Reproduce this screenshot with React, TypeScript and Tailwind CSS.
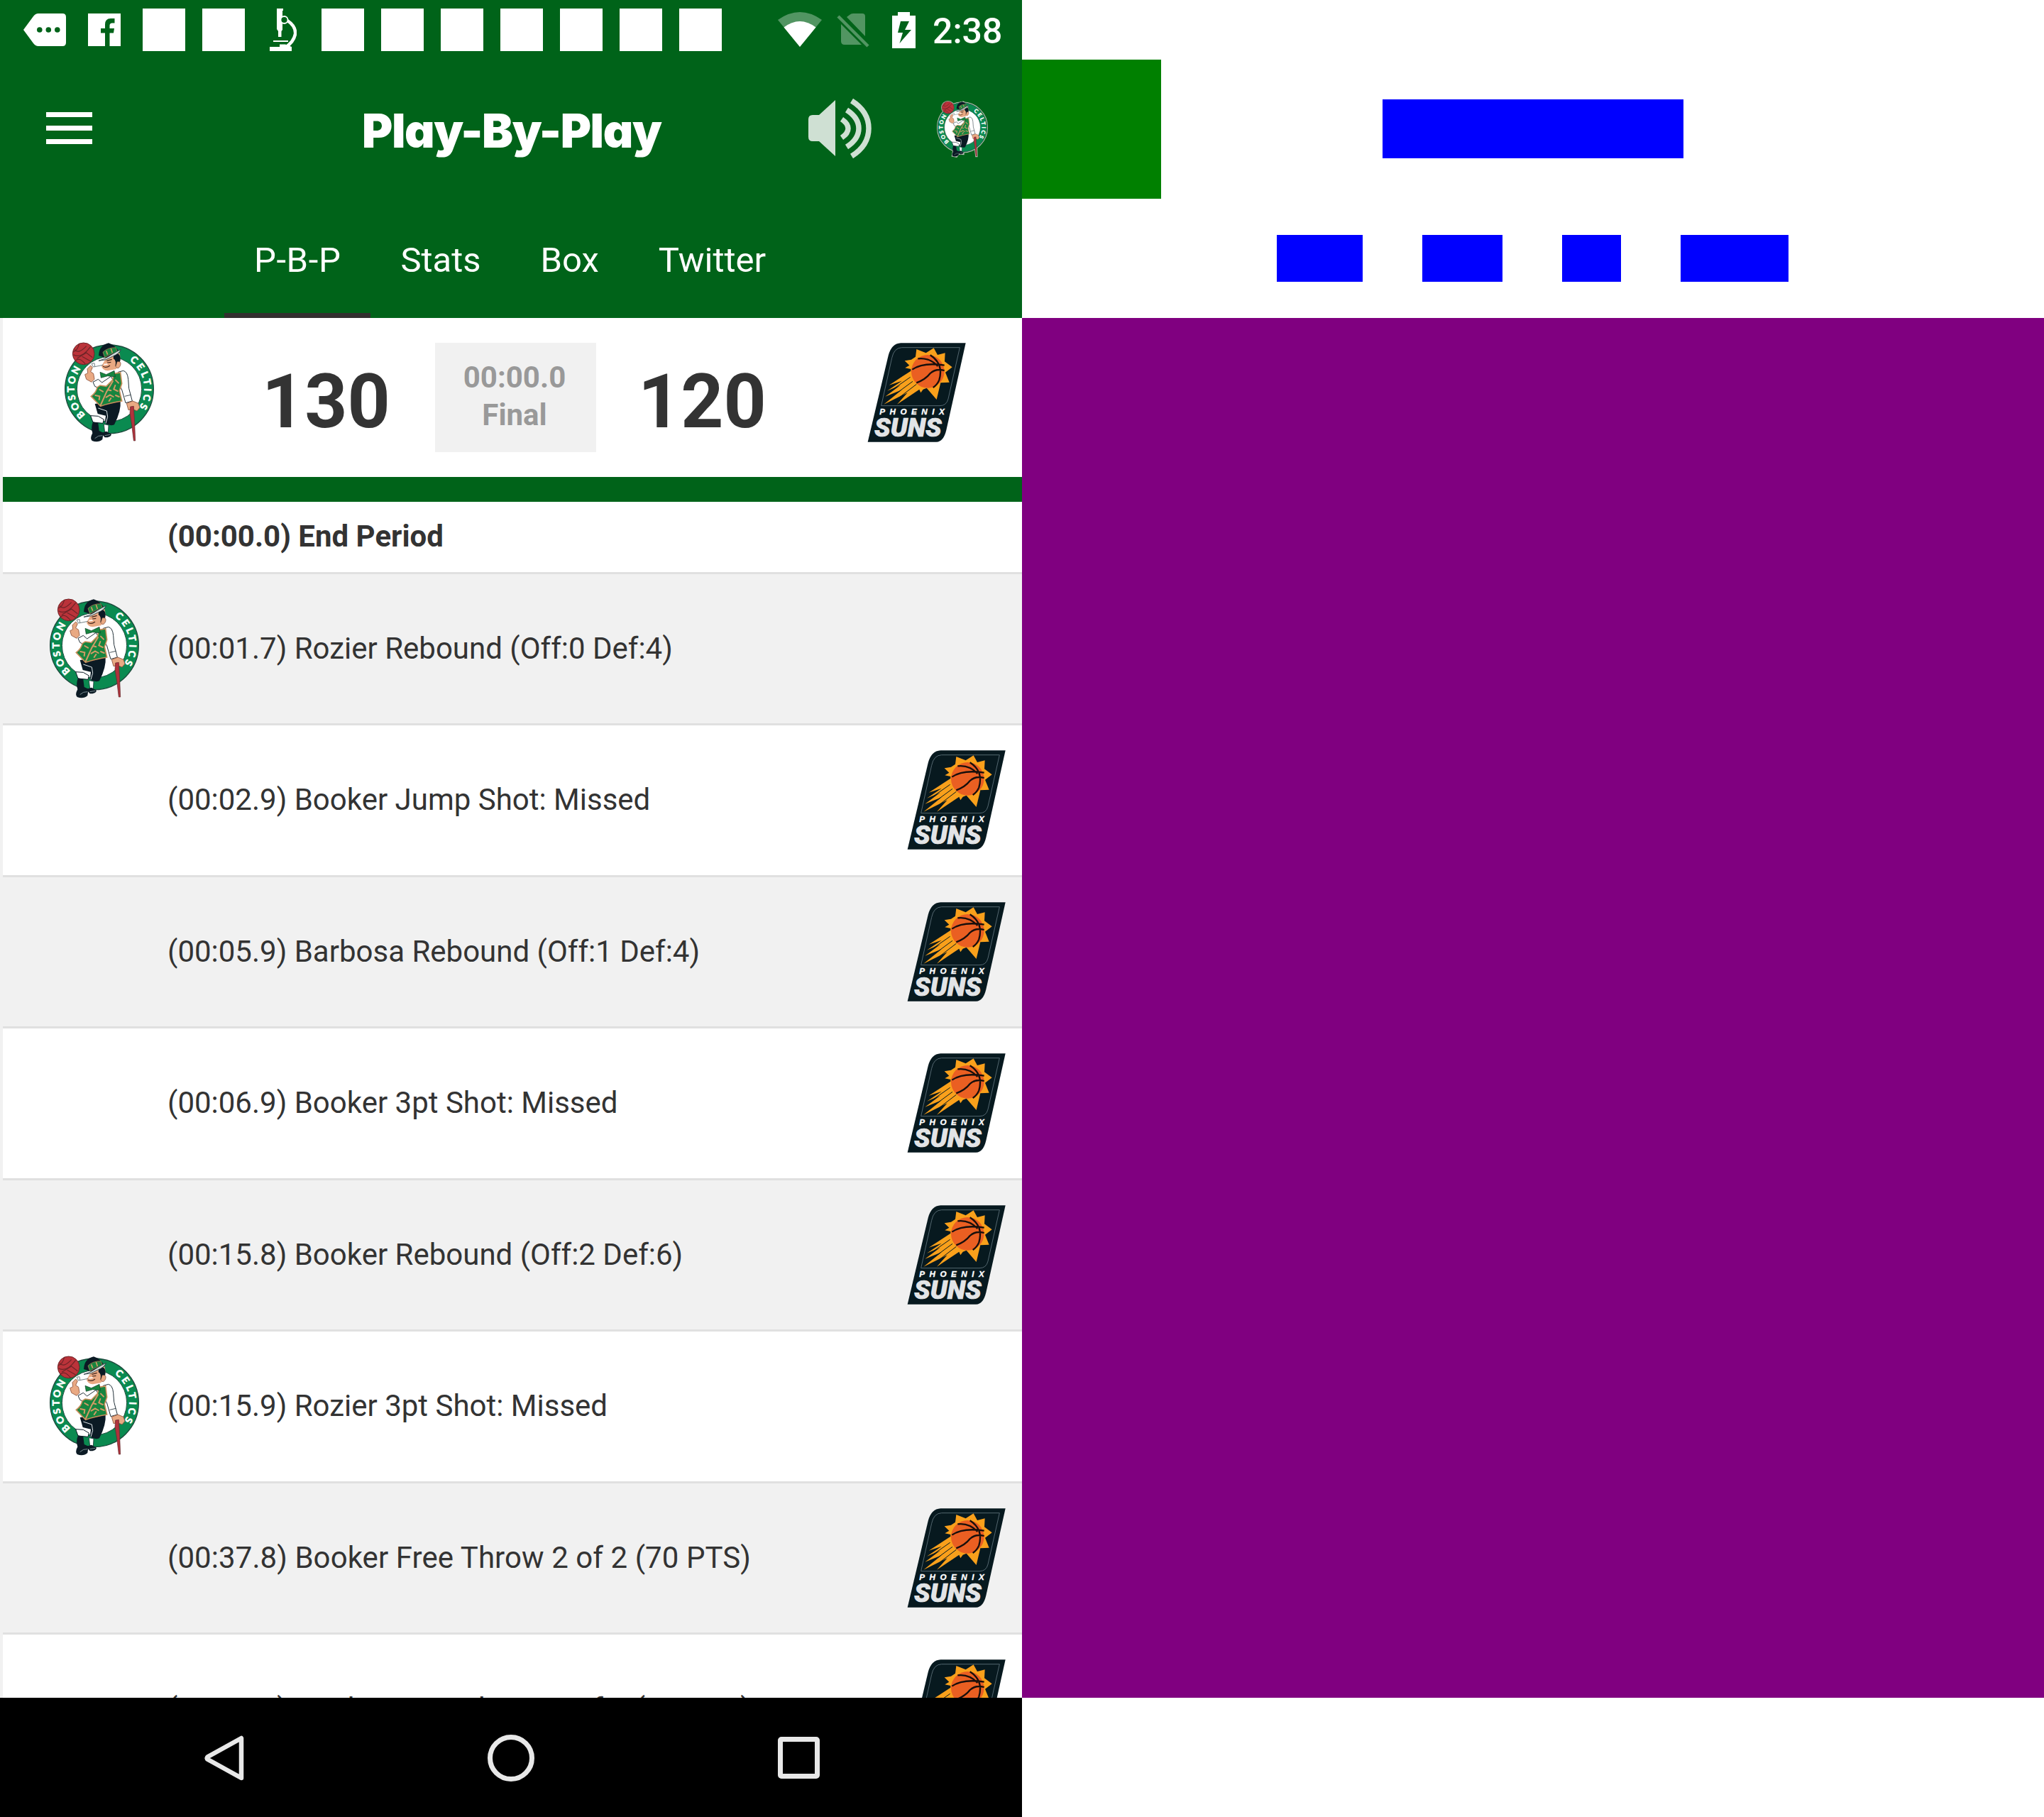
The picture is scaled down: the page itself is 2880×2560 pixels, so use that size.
import { useId } from "react";

const GREEN = "#006319";

function CelticsLogo({ className, outline = false }: { className: string; outline?: boolean }) {
  const id = useId();
  return (
    <svg className={className} viewBox="27 42 384 420" overflow="visible">
      <defs>
        <path id={id + "b"} d="M118 346.500A148 148 0 0 1 100.800 149" />
        <path id={id + "c"} d="M303.900 116.800A148 148 0 0 1 345.900 314.200" />
      </defs>
      {outline && (
        <g fill="#b9c4b4" stroke="#b9c4b4" strokeWidth="10">
          <circle cx="219" cy="238" r="189" />
          <circle cx="110" cy="88" r="47" />
          <path d="M170 110Q185 44 225 44Q260 60 266 110ZM145 350L152 400L142 455L175 462L192 440L228 442L230 400ZM304 310L322 458L330 458L326 310Z" />
        </g>
      )}
      <circle cx="219" cy="238" r="187" fill="#0a8a50" stroke="#1c4a3c" strokeWidth="4" />
      <circle cx="219" cy="238" r="137" fill="#fff" stroke="#1c4a3c" strokeWidth="3" />
      <g fill="#fff" stroke="#fff" strokeWidth="1.5" fontFamily="Lato" fontWeight="900" fontSize="41">
        <text textLength="214" lengthAdjust="spacing">
          <textPath href={"#" + id + "b"}>BOSTON</textPath>
        </text>
        <text textLength="222" lengthAdjust="spacing">
          <textPath href={"#" + id + "c"}>CELTICS</textPath>
        </text>
      </g>
      <circle cx="110" cy="88" r="46" fill="#bb333a" stroke="#6d2427" strokeWidth="3" />
      <path
        d="M72 70Q88 92 122 56M68 92Q100 112 140 58M82 108L122 84L148 104M76 118Q92 100 118 132M104 100L140 120M92 46Q84 76 66 80"
        fill="none"
        stroke="#6d2427"
        strokeWidth="3.5"
      />
      {/* pants and shoes */}
      <path d="M158 300L266 286Q270 330 240 388Q222 396 200 382L204 350L170 342Z" fill="#0b1a24" />
      <path d="M172 318L208 330L212 355L204 382" fill="none" stroke="#dfe6ea" strokeWidth="3" />
      <path d="M140 350L172 352L196 366L192 382L150 378Z" fill="#fff" stroke="#0b1a24" strokeWidth="3" />
      <path d="M196 386L216 390L214 420L200 420Z" fill="#fff" stroke="#0b1a24" strokeWidth="2" />
      <path d="M150 376L172 382L176 414L194 422L190 450Q172 466 146 456Q136 446 148 424Q140 400 150 376Z" fill="#0b1a24" />
      <path d="M184 424L206 416L228 428Q226 442 200 442Z" fill="#0b1a24" />
      <path d="M158 446Q172 432 190 434M200 434L222 430" fill="none" stroke="#8fa3a8" strokeWidth="2.5" />
      {/* sleeves */}
      <path
        d="M256 166L278 160Q296 164 299 196L302 235L316 288L288 296L272 240L264 226Z"
        fill="#fff"
        stroke="#24323a"
        strokeWidth="3"
      />
      <path d="M284 268L310 262" stroke="#24323a" strokeWidth="2.5" />
      <path
        d="M150 208L172 196L188 210L226 184L234 198L208 226L172 232L158 226Z"
        fill="#fff"
        stroke="#24323a"
        strokeWidth="3"
      />
      {/* waistcoat */}
      <path
        d="M180 222L206 226L232 200L240 172L266 168L272 214L262 244L272 288Q220 296 182 310L142 268Q164 252 168 230Z"
        fill="#17853f"
        stroke="#c98f5b"
        strokeWidth="5"
      />
      <g fill="none" stroke="#d29a66" strokeWidth="6" strokeLinecap="round">
        <path d="M234 204L208 248L182 306M178 240L192 248M160 264L178 268L176 282M206 272L222 262L236 270M218 288L226 276M246 200L258 212M244 222L238 238L254 246M246 264L260 270M212 240L226 244" />
      </g>
      {/* head */}
      <path d="M206 106L262 84Q274 130 246 154L212 160Q190 158 186 140Z" fill="#e9a983" />
      <path d="M238 90Q262 80 266 106Q266 138 244 140Q250 116 236 108Z" fill="#0b1a24" />
      <path d="M252 122Q272 118 266 138Q256 158 246 142Z" fill="#e9a983" stroke="#7a4a38" strokeWidth="2" />
      <path d="M192 142Q206 150 222 138M208 118L230 112M210 126L226 124" fill="none" stroke="#41251c" strokeWidth="3.5" />
      <path d="M212 132L196 134" stroke="#fff" strokeWidth="5" />
      <path d="M174 96Q176 52 216 43Q246 52 262 84L204 106Z" fill="#0b1a24" />
      <path d="M192 82Q210 62 246 62L254 82Q224 86 200 104Z" fill="#17853f" stroke="#c98f5b" strokeWidth="2" />
      <path d="M206 76L212 92M226 66L232 84" stroke="#d29a66" strokeWidth="5" />
      <path d="M174 118Q200 112 228 92Q248 80 268 70Q262 88 232 100Q206 118 174 118Z" fill="#d4dedb" stroke="#24323a" strokeWidth="2.5" />
      <path d="M180 166L206 176L240 160L244 186L212 182L184 190Z" fill="#17853f" stroke="#0b3a24" strokeWidth="2" />
      {/* hands, pipe and cane */}
      <path d="M126 152L140 138L148 146L140 164L152 172L156 196L144 208L122 196L116 176L128 170Z" fill="#e9a983" stroke="#8a4f38" strokeWidth="2.5" />
      <path d="M144 130L152 144L192 136M144 130L156 128L158 142" fill="none" stroke="#59686c" strokeWidth="2.5" />
      <path d="M292 298L318 288L342 298L348 316L336 330L316 322L300 326Z" fill="#e9a983" stroke="#8a4f38" strokeWidth="2.5" />
      <path d="M308 312L322 310L326 380L329 456L322 456L314 390L306 340Z" fill="#b0323c" stroke="#5d2a2c" strokeWidth="2" />
    </svg>
  );
}

function SunsLogo({ className }: { className: string }) {
  return (
    <svg className={className} viewBox="54 51 420 420">
      <path d="M196 52H470L388 420Q376 470 346 470H56L143 105Q156 54 196 52Z" fill="#07191f" />
      <path
        d="M200 71H445L396 288Q389 317 360 317H113L158 115Q167 72 200 71Z"
        fill="none"
        stroke="#53666f"
        strokeWidth="3"
      />
      <path
        d="M262 78L302 94L335 73L351 102L383 94L381 130L413 154L384 176L401 218L364 220L347 291L305 242L290 248L280 262L274 248L180 311L224 262L124 311L200 250L130 278L194 230L138 254L200 212L146 230L238 170L238 162L214 157L232 146L212 127L240 122L258 110Z"
        fill="#f9a01b"
      />
      <path d="M236 196L150 256M246 214L140 292M262 226L176 292" stroke="#07191f" strokeWidth="3" />
      <circle cx="310" cy="172" r="70" fill="#ea5f22" />
      <path
        d="M268 118Q318 112 352 150M244 164Q290 132 380 146M262 220Q300 206 320 180Q344 158 380 168M320 103Q378 140 358 208Q350 228 332 240"
        fill="none"
        stroke="#180f0c"
        strokeWidth="7"
      />
      <text
        x="106"
        y="355"
        textLength="274"
        fontFamily="Liberation Sans"
        fontStyle="italic"
        fontWeight="700"
        fontSize="35"
        fill="#fff"
        stroke="#fff"
        strokeWidth="1"
      >
        PHOENIX
      </text>
      <text
        x="84"
        y="447"
        textLength="284"
        lengthAdjust="spacingAndGlyphs"
        fontFamily="Roboto"
        fontStyle="italic"
        fontWeight="900"
        fontSize="112"
        fill="#e2e4e6"
        stroke="#eceef0"
        strokeWidth="2"
      >
        SUNS
      </text>
    </svg>
  );
}

function StatusBar() {
  return (
    <div className="flex h-[84px] items-center pl-[21px]">
      <div className="flex w-[84px] justify-center">
        <svg className="h-[46px] w-[60px]" viewBox="0 0 60 46">
          <path fillRule="evenodd" fill="#fff" d="M0 23L14 4Q17 0 21 0H55Q60 0 60 5V41Q60 46 55 46H21Q17 46 14 42ZM19 23a3.8 3.8 0 1 0 7.600 0a3.800 3.800 0 1 0-7.600 0ZM31.500 23a3.800 3.800 0 1 0 7.600 0a3.800 3.800 0 1 0-7.600 0ZM44 23a3.800 3.800 0 1 0 7.600 0a3.800 3.800 0 1 0-7.600 0Z" />
        </svg>
      </div>
      <div className="flex w-[84px] justify-center">
        <svg className="h-[46px] w-[46px]" viewBox="0 0 46 46">
          <path fill="#fff" d="M0 0H46V46H30.500V27.500H36L37 21H30.500V17Q30.500 13.500 34 13.500H37.500V7H32Q24 7 24 15.500V21H18V27.500H24V46H0Z" />
        </svg>
      </div>
      <div className="flex w-[84px] justify-center">
        <div className="h-[60px] w-[60px] bg-white" />
      </div>
      <div className="flex w-[84px] justify-center">
        <div className="h-[60px] w-[60px] bg-white" />
      </div>
      <div className="flex w-[84px] justify-center">
        <svg className="h-[60px] w-[38px]" viewBox="0 0 38 60">
          <path fill="#fff" d="M10 0H19V3H18V30L16.500 32V40H12V32L10 29Z" />
          <path d="M25 17Q37 25 36 36Q34 47 22 55" fill="none" stroke="#fff" strokeWidth="4.500" />
          <circle cx="20.500" cy="16" r="5" fill={GREEN} stroke="#fff" strokeWidth="1.800" />
          <path fill="#fff" d="M5 45H26V47H5ZM0 54H14V50.500H22L31 54V60H0Z" />
        </svg>
      </div>
      {Array.from({ length: 7 }, (_, i) => (
        <div key={i} className="flex w-[84px] justify-center">
          <div className="h-[60px] w-[60px] bg-white" />
        </div>
      ))}
      <svg className="ml-[67px] h-[50px] w-[62px]" viewBox="0 0 62 50">
        <path d="M31 49L0 11Q31-11 62 11Z" fill="#fff" fillOpacity="0.32" />
        <path d="M31 49L8.500 21.500Q31 4.500 53.500 21.500Z" fill="#fff" />
      </svg>
      <svg className="ml-[21px] h-[50px] w-[46px]" viewBox="0 0 46 50">
        <path d="M14 7L18 4Q20 2 23 2H36Q40 2 40 6V34ZM6 17L35 46H11Q6 46 6 41Z" fill="#fff" fillOpacity="0.32" />
        <path d="M2 6L44 48" stroke="#fff" strokeOpacity="0.32" strokeWidth="4.500" />
      </svg>
      <svg className="ml-[32px] h-[51px] w-[33px]" viewBox="0 0 33 51">
        <path fillRule="evenodd" fill="#fff" d="M8 0H25V5H33V51H0V5H8ZM12 13L8 29H15L10.500 44L27 25H18L24 13Z" />
      </svg>
      <span className="ml-[24px] pt-[3px] font-['Roboto'] text-[50px] leading-[60px] font-medium text-white">2:38</span>
    </div>
  );
}

function AppBar() {
  return (
    <div className="flex h-[196px] items-start">
      <div className="mt-[74px] ml-[65px] flex w-[65px] flex-col gap-[12px]">
        <div className="h-[7px] bg-white" />
        <div className="h-[7px] bg-white" />
        <div className="h-[7px] bg-white" />
      </div>
      <h1 className="mt-[59px] ml-[380px] w-[428px] font-['Inter'] text-[66px] leading-[83px] font-black tracking-[-1.4px] whitespace-nowrap text-white [font-feature-settings:'cv11']">
        Play-By-Play
      </h1>
      <svg className="mt-[54px] ml-[200px] h-[86px] w-[91px]" viewBox="0 0 91 86">
        <path d="M39 3V82L16 61H7Q1 61 1 55V30Q1 24 7 24H16Z" fill="#cfe0d3" />
        <g fill="none" stroke="#cfe0d3" strokeWidth="7.500">
          <path d="M48 30Q57 36 57 43Q57 50 48 56" />
          <path d="M55 17Q72 28 72 43Q72 58 55 69" />
          <path d="M62 4Q86 19 86 43Q86 67 62 82" />
        </g>
      </svg>
      <CelticsLogo className="mt-[59px] ml-[91px] h-[78px] w-[72px]" outline />
    </div>
  );
}

const TABS = ["P-B-P", "Stats", "Box", "Twitter"];

function Tabs() {
  return (
    <div className="flex h-[168px] justify-center pr-[3px]">
      {TABS.map((t, i) => (
        <div
          key={t}
          className={
            i === 0
              ? "border-b-[7px] border-[#332f2f] px-[42px] pt-[54px] tracking-[0.6px]"
              : "border-b-[7px] border-transparent px-[42px] pt-[54px]"
          }
        >
          <span className="block font-['Roboto'] text-[49px] leading-[66px] text-white">{t}</span>
        </div>
      ))}
    </div>
  );
}

function ScoreHeader() {
  return (
    <div className="flex h-[223.5px] shrink-0 items-start bg-white pt-[35px] font-['Roboto']">
      <CelticsLogo className="ml-[86px] h-[140px] w-[128px]" />
      <span className="ml-[151px] w-[188px] text-[105px] leading-[167px] font-bold text-[#333]">130</span>
      <div className="ml-[56px] flex h-[154px] w-[227px] flex-col items-center bg-[#f1f1f1] pt-[22px] pr-[3px] text-[42px] leading-[53px] font-bold text-[#999]">
        <span>00:00.0</span>
        <span>Final</span>
      </div>
      <span className="ml-[59px] w-[188px] text-[105px] leading-[167px] font-bold text-[#333]">120</span>
      <SunsLogo className="ml-[135px] h-[140px] w-[140px]" />
    </div>
  );
}

const PLAYS: { text: string; team: "bos" | "phx"; loose?: boolean }[] = [
  { text: "(00:01.7) Rozier Rebound (Off:0 Def:4)", team: "bos" },
  { text: "(00:02.9) Booker Jump Shot: Missed", team: "phx" },
  { text: "(00:05.9) Barbosa Rebound (Off:1 Def:4)", team: "phx" },
  { text: "(00:06.9) Booker 3pt Shot: Missed", team: "phx" },
  { text: "(00:15.8) Booker Rebound (Off:2 Def:6)", team: "phx" },
  { text: "(00:15.9) Rozier 3pt Shot: Missed", team: "bos" },
  { text: "(00:37.8) Booker Free Throw 2 of 2 (70 PTS)", team: "phx", loose: true },
  { text: "(00:37.8) Booker Free Throw 1 of 2 (69 PTS)", team: "phx", loose: true },
];

function PlayRow({ text, team, shaded, loose }: { text: string; team: "bos" | "phx"; shaded: boolean; loose?: boolean }) {
  return (
    <div
      className={
        shaded
          ? "flex h-[213.5px] shrink-0 items-center border-b-[3.5px] border-[#e0e0e0] bg-[#f1f1f1] pr-[22px] pl-[65px]"
          : "flex h-[213.5px] shrink-0 items-center border-b-[3.5px] border-[#e0e0e0] bg-white pr-[22px] pl-[65px]"
      }
    >
      <div className="w-[167px]">{team === "bos" && <CelticsLogo className="h-[140px] w-[128px]" />}</div>
      <span
        className={
          loose
            ? "mb-px grow font-['Roboto'] text-[42px] leading-[49px] tracking-[0.07px] text-[#333]"
            : "mb-px grow font-['Roboto'] text-[42px] leading-[49px] text-[#333]"
        }
      >
        {text}
      </span>
      {team === "phx" && <SunsLogo className="h-[140px] w-[140px]" />}
    </div>
  );
}

function NavBar() {
  return (
    <div className="flex h-[168px] items-center bg-black pt-px">
      <svg className="ml-[287px] h-[66px] w-[58px]" viewBox="0 0 58 66">
        <path d="M53 5V61L6 35Q3 33 6 31Z" fill="none" stroke="#e8e8e8" strokeWidth="6.500" strokeLinejoin="round" />
      </svg>
      <div className="ml-[342px] h-[66px] w-[66px] rounded-full border-[7px] border-[#e8e8e8]" />
      <div className="ml-[343px] h-[59px] w-[59px] rounded-[5px] border-[7px] border-[#e8e8e8]" />
    </div>
  );
}

export default function App() {
  return (
    <div className="flex h-[2560px] w-[2880px] bg-white">
      <div className="flex w-[1440px] shrink-0 flex-col">
        <div className="h-[448px] shrink-0 bg-[#006319]">
          <StatusBar />
          <AppBar />
          <Tabs />
        </div>
        <div className="flex h-[1944px] flex-col overflow-hidden bg-[#f1f1f1] pl-[4px]">
          <ScoreHeader />
          <div className="h-[35px] shrink-0 bg-[#006319]" />
          <div className="flex h-[102px] shrink-0 items-center border-b-[3.5px] border-[#e0e0e0] bg-white pl-[232px]">
            <span className="mb-px font-['Roboto'] text-[42px] leading-[49px] font-bold text-[#333]">(00:00.0) End Period</span>
          </div>
          {PLAYS.map((p, i) => (
            <PlayRow key={i} text={p.text} team={p.team} shaded={i % 2 === 0} loose={p.loose} />
          ))}
        </div>
        <NavBar />
      </div>
      <div className="flex w-[1440px] shrink-0 flex-col">
        <div className="mt-[84px] flex h-[196px] items-start">
          <div className="h-[196px] w-[196px] bg-[#008000]" />
          <div className="mt-[56px] ml-[312px] h-[83px] w-[424px] bg-[#0000ff]" />
        </div>
        <div className="flex h-[168px] gap-[84px] pt-[51px] pl-[359px]">
          <div className="h-[66px] w-[121px] bg-[#0000ff]" />
          <div className="h-[66px] w-[113px] bg-[#0000ff]" />
          <div className="h-[66px] w-[83px] bg-[#0000ff]" />
          <div className="h-[66px] w-[152px] bg-[#0000ff]" />
        </div>
        <div className="h-[1944px] bg-[#800080]" />
      </div>
    </div>
  );
}
